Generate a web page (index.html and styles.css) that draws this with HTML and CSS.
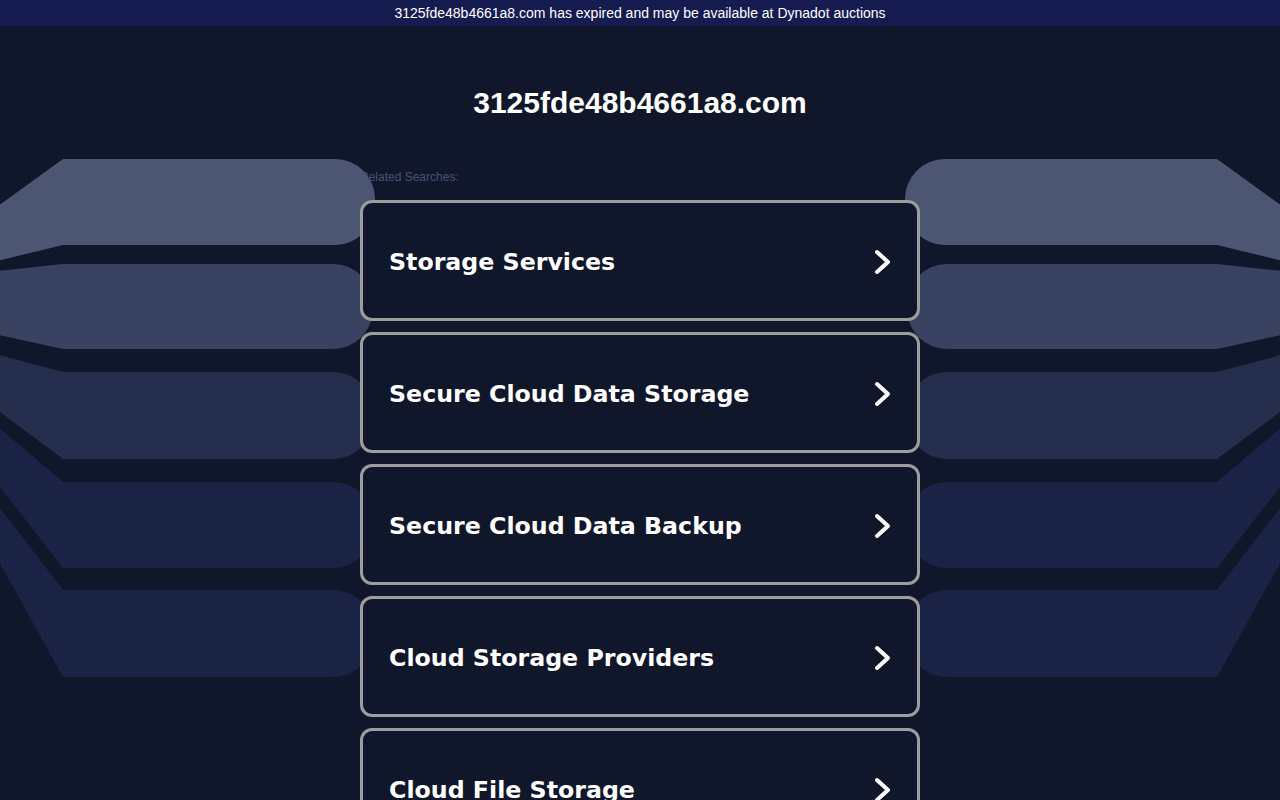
FILE: index.html
```html
<!DOCTYPE html>
<html lang="en">
<head>
<meta charset="utf-8">
<title>3125fde48b4661a8.com</title>
<link rel="stylesheet" href="styles.css">
</head>
<body>
<div class="topbar">3125fde48b4661a8.com has expired and may be available at Dynadot auctions</div>
<svg class="bg" viewBox="0 0 1280 800" width="1280" height="800" aria-hidden="true">
  <defs>
    <pattern id="dots" width="4" height="4" patternUnits="userSpaceOnUse">
      <rect width="4" height="4" fill="#1b2346"/>
      <rect x="1" y="1" width="1" height="1" fill="#161d3c"/>
    </pattern>
  </defs>
  <g class="left">
    <path fill="#4c5673" d="M-20 219 L63 159 L335 159 A40 40 0 0 1 375 199 L375 205 A40 40 0 0 1 335 245 L63 245 L-20 265 Z"/>
    <path fill="#3a4262" d="M-20 273 L63 264 L333 264 A40 40 0 0 1 373 304 L373 309 A40 40 0 0 1 333 349 L63 349 L-20 331 Z"/>
    <path fill="#262e4d" d="M-20 350 L63 372 L333 372 A40 40 0 0 1 373 412 L373 419 A40 40 0 0 1 333 459 L63 459 L-20 397 Z"/>
    <path fill="url(#dots)" d="M-20 412 L63 482 L333 482 A40 40 0 0 1 373 522 L373 528 A40 40 0 0 1 333 568 L63 568 L-20 461 Z"/>
    <path fill="url(#dots)" d="M-20 482 L63 590 L333 590 A40 40 0 0 1 373 630 L373 637 A40 40 0 0 1 333 677 L63 677 L-20 527 Z"/>
  </g>
  <g transform="translate(1280 0) scale(-1 1)">
    <path fill="#4c5673" d="M-20 219 L63 159 L335 159 A40 40 0 0 1 375 199 L375 205 A40 40 0 0 1 335 245 L63 245 L-20 265 Z"/>
    <path fill="#3a4262" d="M-20 273 L63 264 L333 264 A40 40 0 0 1 373 304 L373 309 A40 40 0 0 1 333 349 L63 349 L-20 331 Z"/>
    <path fill="#262e4d" d="M-20 350 L63 372 L333 372 A40 40 0 0 1 373 412 L373 419 A40 40 0 0 1 333 459 L63 459 L-20 397 Z"/>
    <path fill="url(#dots)" d="M-20 412 L63 482 L333 482 A40 40 0 0 1 373 522 L373 528 A40 40 0 0 1 333 568 L63 568 L-20 461 Z"/>
    <path fill="url(#dots)" d="M-20 482 L63 590 L333 590 A40 40 0 0 1 373 630 L373 637 A40 40 0 0 1 333 677 L63 677 L-20 527 Z"/>
  </g>
</svg>
<main class="content">
  <h1 class="domain">3125fde48b4661a8.com</h1>
  <div class="related">Related Searches:</div>
  <div class="list">
    <a class="card" href="#"><span class="label">Storage Services</span><svg class="chev" viewBox="0 0 20 26" width="20" height="26"><path d="M4 3 L15 13 L4 23" fill="none" stroke="#fff" stroke-width="4" stroke-linecap="round" stroke-linejoin="round"/></svg></a>
    <a class="card" href="#"><span class="label">Secure Cloud Data Storage</span><svg class="chev" viewBox="0 0 20 26" width="20" height="26"><path d="M4 3 L15 13 L4 23" fill="none" stroke="#fff" stroke-width="4" stroke-linecap="round" stroke-linejoin="round"/></svg></a>
    <a class="card" href="#"><span class="label">Secure Cloud Data Backup</span><svg class="chev" viewBox="0 0 20 26" width="20" height="26"><path d="M4 3 L15 13 L4 23" fill="none" stroke="#fff" stroke-width="4" stroke-linecap="round" stroke-linejoin="round"/></svg></a>
    <a class="card" href="#"><span class="label">Cloud Storage Providers</span><svg class="chev" viewBox="0 0 20 26" width="20" height="26"><path d="M4 3 L15 13 L4 23" fill="none" stroke="#fff" stroke-width="4" stroke-linecap="round" stroke-linejoin="round"/></svg></a>
    <a class="card" href="#"><span class="label">Cloud File Storage</span><svg class="chev" viewBox="0 0 20 26" width="20" height="26"><path d="M4 3 L15 13 L4 23" fill="none" stroke="#fff" stroke-width="4" stroke-linecap="round" stroke-linejoin="round"/></svg></a>
  </div>
</main>
</body>
</html>
```
FILE: styles.css
```css
html, body {
  margin: 0;
  padding: 0;
}
body {
  background: #11172b;
  font-family: "Liberation Sans", Arial, sans-serif;
  color: #fff;
  width: 1280px;
  height: 800px;
  overflow: hidden;
  position: relative;
}
.topbar {
  height: 26px;
  line-height: 26px;
  background: #161b50;
  color: #fff;
  font-size: 14px;
  text-align: center;
}
.bg {
  position: absolute;
  top: 0;
  left: 0;
  z-index: 1;
}
.content {
  width: 560px;
  margin: 0 auto;
  display: flex;
  flex-direction: column;
}
.domain {
  margin: 60px 0 0;
  font-size: 30px;
  line-height: 34px;
  font-weight: bold;
  text-align: center;
  color: #fff;
}
.related {
  margin-top: 50px;
  font-size: 12px;
  line-height: 14px;
  color: #4a5274;
}
.list {
  margin-top: 16px;
  display: flex;
  flex-direction: column;
  gap: 11px;
}
.card {
  position: relative;
  z-index: 2;
  box-sizing: border-box;
  height: 121px;
  border: 3px solid #9d9d9f;
  border-radius: 12px;
  background: #11172b;
  display: flex;
  align-items: center;
  justify-content: space-between;
  padding: 2px 24px 0 26px;
  text-decoration: none;
  color: #fff;
}
.label {
  font-family: "DejaVu Sans", Verdana, sans-serif;
  font-weight: bold;
  font-size: 23.7px;
  color: #fff;
}
.chev {
  display: block;
}
```
